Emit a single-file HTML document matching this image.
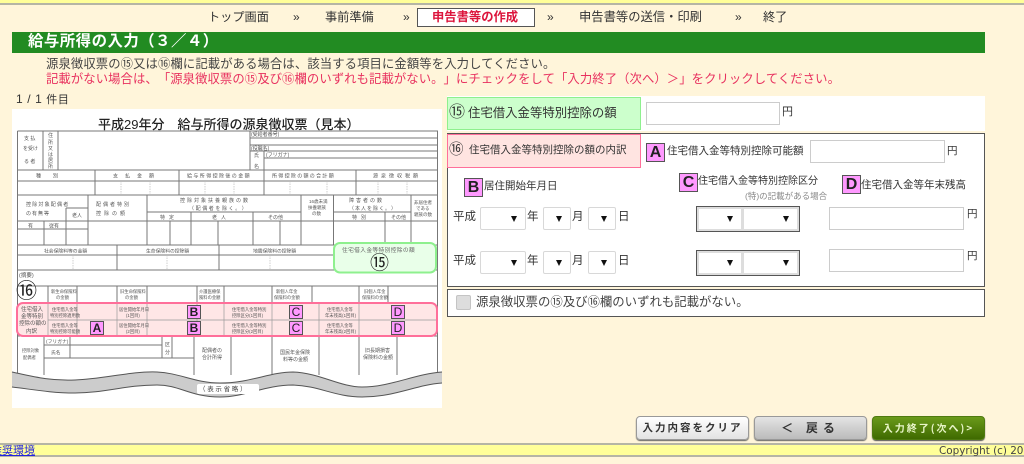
<!DOCTYPE html>
<html lang="ja"><head><meta charset="utf-8"><title>給与所得の入力</title>
<style>
html,body{margin:0;padding:0;width:1024px;height:464px;overflow:hidden;background:#fff5da}
body{position:relative;font-family:"Liberation Sans","Noto Sans CJK JP",sans-serif;color:#333;font-size:12px;text-spacing-trim:space-all;filter:blur(.3px)}
svg text{text-spacing-trim:space-all}
.a{position:absolute;white-space:nowrap;line-height:1}
.inp{position:absolute;box-sizing:border-box;background:#fff;border:1.5px solid #ccc}
.sel{position:absolute;box-sizing:border-box;background:#fff;border:1.5px solid #d8d8d8;border-radius:2px;height:23px}
.sel:after{content:"";position:absolute;right:8px;top:8px;border-left:3.5px solid transparent;border-right:3.5px solid transparent;border-top:6px solid #111}
.pair{position:absolute;box-sizing:border-box;left:696px;width:104px;height:26px;border:1.5px solid #555;background:#ddd}
.pair i{position:absolute;top:1px;bottom:1px;background:#fff;border:1px solid #ddd;box-sizing:border-box}
.pair i:after{content:"";position:absolute;right:8px;top:7px;border-left:3.5px solid transparent;border-right:3.5px solid transparent;border-top:6px solid #111}
.k{position:absolute;box-sizing:border-box;width:19px;height:19px;background:#ff99ff;border:1px solid #555;color:#222;font:bold 16px/17px "Liberation Sans",sans-serif;text-align:center}
.btn{position:absolute;box-sizing:border-box;top:416px;height:24px;border-radius:4px;text-align:center;font:bold 10.5px/22px "Noto Sans CJK JP",sans-serif;letter-spacing:2px}
</style></head><body>
<div class="a" style="left:0;top:0;width:1024px;height:3px;background:#ffff99"></div>
<div class="a" style="left:0;top:3px;width:1024px;height:1.5px;background:#b5b5a5"></div>

<!-- nav -->
<div class="a" style="left:208px;top:11px;font-size:12.2px">トップ画面</div>
<div class="a" style="left:293px;top:11px;font-size:12px">»</div>
<div class="a" style="left:325px;top:11px;font-size:12.2px">事前準備</div>
<div class="a" style="left:403px;top:11px;font-size:12px">»</div>
<div class="a" style="left:417px;top:8px;width:118px;height:19px;box-sizing:border-box;background:#fff;border:1px solid #555"></div>
<div class="a" style="left:432px;top:11px;font-size:12.3px;font-weight:bold;color:#dc143c">申告書等の作成</div>
<div class="a" style="left:547px;top:11px;font-size:12px">»</div>
<div class="a" style="left:579px;top:11px;font-size:12.3px">申告書等の送信・印刷</div>
<div class="a" style="left:735px;top:11px;font-size:12px">»</div>
<div class="a" style="left:763px;top:11px;font-size:12.2px">終了</div>

<!-- title -->
<div class="a" style="left:12px;top:32px;width:973px;height:21px;background:#228b22"></div>
<div class="a" style="left:28px;top:34px;font-size:15.4px;font-weight:bold;color:#fff;letter-spacing:.5px">給与所得の入力（３／４）</div>

<div class="a" style="left:46px;top:58px;font-size:12.35px;letter-spacing:.1px;color:#444">源泉徴収票の⑮又は⑯欄に記載がある場合は、該当する項目に金額等を入力してください。</div>
<div class="a" style="left:46px;top:73px;font-size:12.35px;letter-spacing:.08px;color:#e8315f">記載がない場合は、「源泉徴収票の⑮及び⑯欄のいずれも記載がない。」にチェックをして「入力終了（次へ）＞」をクリックしてください。</div>
<div class="a" style="left:16px;top:93px;font-size:12px;letter-spacing:.6px">1 / 1 <span style="font-size:11px">件目</span></div>

<!-- form image -->
<svg class="a" style="left:0;top:0" width="445" height="464" viewBox="0 0 445 464" font-family="'Liberation Sans','Noto Sans CJK JP',sans-serif">
<rect x="12" y="109" width="430" height="299" fill="#fff"/>
<text x="98" y="129" font-size="13" font-weight="500" fill="#222">平成29年分　給与所得の源泉徴収票（見本）</text>
<g fill="none" stroke="#777" stroke-width="1">
<path d="M17.5 131H437.5V375M17.5 131V375"/>
<path d="M43 131V170M58 131V170M250 131V170M264 151V170M250 138H437M250 145H437M250 151H437M264 158H437"/>
<path d="M17 170H437M17 181H437M17 195H437"/>
<path d="M95 170V195M179 170V195M264 170V195M356 170V195"/>
<path d="M88 195V245M147 195V245M301 195V245M333.500 195V245M411 195V245M66 208V245M44 221V245M191 212V245M253 212V245M218 221V245M170 221V245M280 221V245M385 212V245"/>
<path d="M66 208H88M147 212H301M333 212H411M17 221H437M17 229H88M17 245H437M17 255H333"/>
<path d="M117 245V270M219 245V270"/>
<path d="M17 270H437M17 286H437"/>
<path d="M48 286V303M77 286V303M117 286V303M147 286V303M197 286V303M224 286V303M272 286V303M312 286V303M359 286V303M388 286V303"/>
<path d="M17 336H437"/>
<path d="M44 336V375M70 336V358M162 336V358M172 336V358M194 336V375M44 345H162M44 358H194M231 336V375M272 336V375M319 336V375M359 336V375M397 336V375"/>
</g>
<g fill="none" stroke="#bbb" stroke-width=".7" stroke-dasharray="1.500 1">
<path d="M121 181V195M150 181V195M205 181V195M234 181V195M290 181V195M327 181V195M378 181V195M407 181V195M73 255V270M167 255V270M270 255V270"/>
</g>
<g font-size="5" fill="#555">
<text x="24" y="140">支 払</text><text x="23" y="150">を受け</text><text x="24" y="163">る 者</text>
<text x="48" y="137">住</text><text x="48" y="144">所</text><text x="48" y="150">又</text><text x="48" y="156">は</text><text x="48" y="162">居</text><text x="48" y="168">所</text>
<text x="251" y="136">(受給者番号)</text><text x="251" y="150">(役職名)</text><text x="254" y="157">氏</text><text x="254" y="168">名</text><text x="266" y="156.500">(フリガナ)</text>
<text x="36" y="177.500" letter-spacing="12">種別</text><text x="113" y="177.500" letter-spacing="7">支払金額</text><text x="187" y="177.500" letter-spacing="1.400">給与所得控除後の金額</text><text x="272" y="177.500" letter-spacing="1.300">所得控除の額の合計額</text><text x="373" y="177.500" letter-spacing="3">源泉徴収税額</text>
<text x="26" y="206" letter-spacing="1.200">控除対象配偶者</text><text x="26" y="215" letter-spacing="1">の有無等</text>
<text x="96" y="206" letter-spacing="2">配偶者特別</text><text x="96" y="215" letter-spacing="3">控除の額</text><text x="72" y="217">老人</text>
<text x="180" y="202" letter-spacing="2">控除対象扶養親族の数</text><text x="189" y="210" letter-spacing="1.600">（配偶者を除く。）</text>
<text x="309" y="203" font-size="4.500">16歳未満</text><text x="308" y="209" font-size="4.500">扶養親族</text><text x="312" y="215" font-size="4.500">の数</text>
<text x="349" y="202" letter-spacing="2">障害者の数</text><text x="349" y="210" letter-spacing="1">（本人を除く。）</text>
<text x="414" y="204" font-size="4.500">非居住者</text><text x="416" y="210" font-size="4.500">である</text><text x="414" y="216" font-size="4.500">親族の数</text>
<text x="160" y="219" letter-spacing="4">特定</text><text x="212" y="219" letter-spacing="4">老人</text><text x="268" y="219">その他</text><text x="352" y="219" letter-spacing="4">特別</text><text x="391" y="219">その他</text>
<text x="28" y="227.500">有</text><text x="49" y="227.500">従有</text>
<text x="44" y="252.500" font-size="4.800">社会保険料等の金額</text><text x="146" y="252.500" font-size="4.800">生命保険料の控除額</text><text x="253" y="252.500" font-size="4.800">地震保険料の控除額</text>
<text x="19" y="277" font-size="5.500">(摘要)</text>
<text x="51" y="293" font-size="4.300">新生命保険料</text><text x="56" y="299" font-size="4.300">の金額</text><text x="120" y="293" font-size="4.300">旧生命保険料</text><text x="125" y="299" font-size="4.300">の金額</text><text x="199" y="293" font-size="4.300">介護医療保</text><text x="199" y="299" font-size="4.300">険料の金額</text><text x="276" y="293" font-size="4.300">新個人年金</text><text x="274" y="299" font-size="4.300">保険料の金額</text><text x="364" y="293" font-size="4.300">旧個人年金</text><text x="362" y="299" font-size="4.300">保険料の金額</text>
<text x="46" y="343" font-size="4.800">(フリガナ)</text><text x="51" y="354" font-size="4.800">氏名</text>
<text x="22" y="352" font-size="4.300">控除対象</text><text x="23" y="359" font-size="4.300">配偶者</text><text x="165" y="346">区</text><text x="165" y="354">分</text>
<text x="202" y="352" font-size="5">配偶者の</text><text x="202" y="359" font-size="5">合計所得</text>
<text x="280" y="354" font-size="5">国民年金保険</text><text x="283" y="361" font-size="5">料等の金額</text><text x="365" y="352" font-size="5">旧長期損害</text><text x="363" y="359" font-size="5">保険料の金額</text>
</g>
<!-- green 15 -->
<rect x="334" y="243" width="102" height="29.500" rx="6" fill="#e9ffe9" stroke="#8ef08e" stroke-width="2"/>
<text x="342" y="252" font-size="5.700" fill="#666" letter-spacing=".4">住宅借入金等特別控除の額</text>
<text x="370" y="269" font-size="19" fill="#222">⑮</text>
<text x="16" y="298" font-size="21" fill="#222">⑯</text>
<!-- pink 16 -->
<rect x="17" y="303" width="420" height="33" rx="6" fill="#ffe6e6" stroke="#ff6f9a" stroke-width="2"/>
<g stroke="#999" stroke-width=".7" fill="none"><path d="M48 304V335M77 304V335M117 304V335M147 304V335M197 304V335M224 304V335M272 304V335M319 304V335M359 304V335M48 320H436"/></g>
<g font-size="4.300" fill="#555">
<text x="21" y="311" font-size="5.500">住宅借入</text><text x="21" y="318" font-size="5.500">金等特別</text><text x="19" y="325" font-size="5.500">控除の額の</text><text x="26" y="333" font-size="5.500">内訳</text>
<text x="52" y="311">住宅借入金等</text><text x="50" y="317">特別控除適用数</text><text x="52" y="327">住宅借入金等</text><text x="50" y="333">特別控除可能額</text>
<text x="119" y="311">居住開始年月日</text><text x="126" y="317">(1回目)</text><text x="119" y="327">居住開始年月日</text><text x="126" y="333">(2回目)</text>
<text x="232" y="311">住宅借入金等特別</text><text x="232" y="317">控除区分(1回目)</text><text x="232" y="327">住宅借入金等特別</text><text x="232" y="333">控除区分(2回目)</text>
<text x="327" y="311">住宅借入金等</text><text x="325" y="317">年末残高(1回目)</text><text x="327" y="327">住宅借入金等</text><text x="325" y="333">年末残高(2回目)</text>
</g>
<!-- wave -->
<path d="M12 372C35 377 50 381 75 380C105 379 130 371 157 372C180 373 195 383 220 383C250 383 270 372 293 372C320 373 340 387 362 387C390 387 415 374 442 372V383C415 385 395 397 362 397C335 397 320 386 293 385C265 385 245 397 220 397C190 397 180 385 157 385C125 385 105 393 75 393C50 393 30 389 12 387Z" fill="#ccc"/>
<path d="M12 372C35 377 50 381 75 380C105 379 130 371 157 372C180 373 195 383 220 383C250 383 270 372 293 372C320 373 340 387 362 387C390 387 415 374 442 372M12 387C30 389 50 393 75 393C105 393 125 385 157 385C180 385 190 397 220 397C245 397 265 385 293 385C320 386 335 397 362 397C395 397 415 385 442 383" fill="none" stroke="#555" stroke-width="1"/>
<rect x="197" y="384" width="62" height="10" rx="2" fill="#fff"/>
<text x="199" y="391" font-size="6.500" fill="#444" letter-spacing="1.700">（表示省略）</text>
</svg>
<div class="k" style="left:90px;top:321px;width:14px;height:14px;font-size:12px;line-height:13px">A</div>
<div class="k" style="left:187px;top:305px;width:14px;height:14px;font-size:12px;line-height:13px">B</div>
<div class="k" style="left:187px;top:321px;width:14px;height:14px;font-size:12px;line-height:13px">B</div>
<div class="k" style="left:289px;top:305px;width:14px;height:14px;font-size:12px;line-height:13px;font-weight:normal">C</div>
<div class="k" style="left:289px;top:321px;width:14px;height:14px;font-size:12px;line-height:13px;font-weight:normal">C</div>
<div class="k" style="left:391px;top:305px;width:14px;height:14px;font-size:12px;line-height:13px;font-weight:normal">D</div>
<div class="k" style="left:391px;top:321px;width:14px;height:14px;font-size:12px;line-height:13px;font-weight:normal">D</div>

<!-- right panels -->
<div class="a" style="left:447px;top:96px;width:538px;height:35px;background:#fff"></div>
<div class="a" style="left:447px;top:97px;width:194px;height:33px;box-sizing:border-box;background:#ccffcc;border:1px solid #8ef08e"></div>
<div class="a" style="left:449px;top:105px;font-size:16px">⑮</div>
<div class="a" style="left:468px;top:107px;font-size:12.4px">住宅借入金等特別控除の額</div>
<div class="inp" style="left:646px;top:102px;width:134px;height:23px"></div>
<div class="a" style="left:782px;top:107px;font-size:11px">円</div>

<div class="a" style="left:447px;top:133px;width:538px;height:154px;box-sizing:border-box;background:#fff;border:1px solid #555"></div>
<div class="a" style="left:447px;top:134px;width:194px;height:34px;box-sizing:border-box;background:#ffe4e1;border:1.5px solid #ff6f9a"></div>
<div class="a" style="left:449px;top:143px;font-size:14.5px">⑯</div>
<div class="a" style="left:469px;top:145px;font-size:10.5px">住宅借入金等特別控除の額の内訳</div>
<div class="k" style="left:646px;top:143px">A</div>
<div class="a" style="left:667px;top:146px;font-size:10.5px">住宅借入金等特別控除可能額</div>
<div class="inp" style="left:810px;top:140px;width:135px;height:23px"></div>
<div class="a" style="left:947px;top:146px;font-size:10.500px">円</div>

<div class="k" style="left:464px;top:178px">B</div>
<div class="a" style="left:484px;top:181px;font-size:10.5px">居住開始年月日</div>
<div class="k" style="left:679px;top:173px">C</div>
<div class="a" style="left:698px;top:177px;font-size:10px">住宅借入金等特別控除区分</div>
<div class="a" style="left:745px;top:192px;font-size:8.500px;color:#888">(特)の記載がある場合</div>
<div class="k" style="left:842px;top:175px">D</div>
<div class="a" style="left:861px;top:180px;font-size:10.5px">住宅借入金等年末残高</div>

<!-- row1 -->
<div class="a" style="left:453px;top:212px;font-size:11.5px">平成</div>
<div class="sel" style="left:480px;top:207px;width:46px"></div>
<div class="a" style="left:527px;top:212px;font-size:11.5px">年</div>
<div class="sel" style="left:543px;top:207px;width:28px"></div>
<div class="a" style="left:572px;top:212px;font-size:11.500px">月</div>
<div class="sel" style="left:588px;top:207px;width:28px"></div>
<div class="a" style="left:618px;top:212px;font-size:11.500px">日</div>
<div class="pair" style="top:206px"><i style="left:1px;width:44px"></i><i style="left:46px;width:55px"></i></div>
<div class="inp" style="left:829px;top:207px;width:135px;height:23px"></div>
<div class="a" style="left:967px;top:209px;font-size:10.5px">円</div>
<!-- row2 -->
<div class="a" style="left:453px;top:256px;font-size:11.5px">平成</div>
<div class="sel" style="left:480px;top:251px;width:46px"></div>
<div class="a" style="left:527px;top:256px;font-size:11.5px">年</div>
<div class="sel" style="left:543px;top:251px;width:28px"></div>
<div class="a" style="left:572px;top:256px;font-size:11.500px">月</div>
<div class="sel" style="left:588px;top:251px;width:28px"></div>
<div class="a" style="left:618px;top:256px;font-size:11.500px">日</div>
<div class="pair" style="top:250px"><i style="left:1px;width:44px"></i><i style="left:46px;width:55px"></i></div>
<div class="inp" style="left:829px;top:249px;width:135px;height:23px"></div>
<div class="a" style="left:967px;top:251px;font-size:10.5px">円</div>

<!-- none checkbox -->
<div class="a" style="left:447px;top:289px;width:538px;height:28px;box-sizing:border-box;background:#fff;border:1px solid #555"></div>
<div class="a" style="left:456px;top:295px;width:15px;height:15px;box-sizing:border-box;background:#ddd;border:1px solid #c4c4c4;border-radius:2px"></div>
<div class="a" style="left:476px;top:296px;font-size:12.4px;color:#444">源泉徴収票の⑮及び⑯欄のいずれも記載がない。</div>

<!-- buttons -->
<div class="btn" style="left:636px;width:113px;background:linear-gradient(#fff,#e2e2e2);border:1px solid #999;box-shadow:0 1px 1px #666;color:#333">入力内容をクリア</div>
<div class="btn" style="left:754px;width:113px;background:linear-gradient(#e4e4e4,#bbb);border:1px solid #999;box-shadow:0 1px 1px #666;color:#333;font-size:12px;letter-spacing:5px">＜ 戻る</div>
<div class="btn" style="left:872px;width:113px;background:linear-gradient(#6a9a1a,#3f6a00);border:1px solid #4f7a10;box-shadow:0 1px 1px #555;color:#e8f5c8;font-size:10px">入力終了(次へ)&gt;</div>

<!-- footer -->
<div class="a" style="left:0;top:443px;width:1024px;height:14px;box-sizing:border-box;background:#ffff99;border-top:2px solid #b5b5a5;border-bottom:2px solid #b5b5a5"></div>
<div class="a" style="left:-9px;top:445px;font-size:11px;color:#2323e0;text-decoration:underline;font-family:'Noto Sans CJK JP',sans-serif">推奨環境</div>
<div class="a" style="left:939px;top:445.500px;font-family:'DejaVu Sans',sans-serif;font-size:10.400px;color:#444">Copyright (c) 20</div>
</body></html>
